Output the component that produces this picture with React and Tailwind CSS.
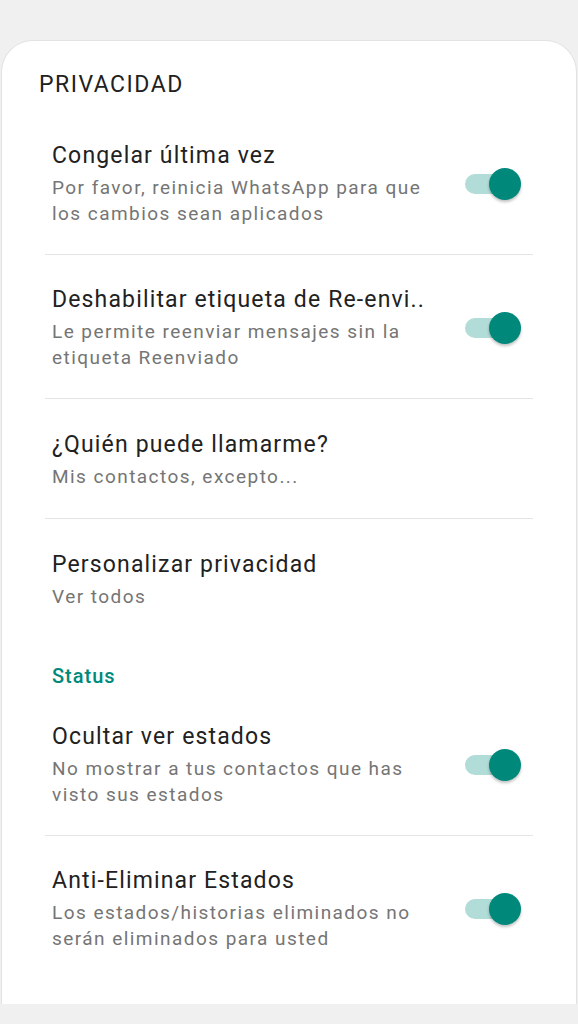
import React from "react";

const Toggle = () => (
  <div className="relative mr-[5px] h-[32px] w-[56px] shrink-0">
    <div className="absolute left-0 top-[6px] h-[20px] w-[48px] rounded-full bg-[#b2dcd7]" />
    <div className="absolute right-0 top-0 h-[32px] w-[32px] rounded-full bg-[#00897b] shadow-[0_2px_3px_rgba(0,0,0,0.25)]" />
  </div>
);

const Row = ({ title, sub, toggle, divider, oneLine }) => (
  <div className={divider ? "border-b border-[#e4e4e4]" : ""}>
    <div
      className={`flex items-center px-[7px] ${
        oneLine ? "pt-[31px] pb-[28px]" : "pt-[30px] pb-[27px]"
      }`}
    >
      <div className="min-w-0 flex-1">
        <div className="whitespace-nowrap text-[23px] leading-[30px] tracking-[1.15px] text-[#212121]">
          {title}
        </div>
        <div className="mt-[4px] pr-[20px] text-[19px] leading-[26px] tracking-[1.45px] text-[#757575]">
          {sub}
        </div>
      </div>
      {toggle && <Toggle />}
    </div>
  </div>
);

export default function App() {
  return (
    <div
      className="min-h-[1024px] bg-[#f0f0f0] pt-[40px]"
      style={{ fontFamily: "Roboto, 'Noto Sans', sans-serif" }}
    >
      <div className="mx-px h-[964px] rounded-t-[32px] border border-b-0 border-[#e2e2e2] bg-white px-[37px] pt-[29px]">
        <div className="text-[23px] leading-[30px] tracking-[1.5px] text-[#212121]">PRIVACIDAD</div>
        <div className="mx-[6px] mt-[11px]">
          <Row
            title="Congelar última vez"
            sub="Por favor, reinicia WhatsApp para que los cambios sean aplicados"
            toggle
            divider
          />
          <Row
            title="Deshabilitar etiqueta de Re-envi.."
            sub="Le permite reenviar mensajes sin la etiqueta Reenviado"
            toggle
            divider
          />
          <Row title="¿Quién puede llamarme?" sub="Mis contactos, excepto..." divider oneLine />
          <Row title="Personalizar privacidad" sub="Ver todos" oneLine />
          <div className="mb-[3px] mt-[25px] px-[7px] text-[20px] font-medium leading-[26px] tracking-[1px] text-[#00897b]">
            Status
          </div>
          <Row
            title="Ocultar ver estados"
            sub="No mostrar a tus contactos que has visto sus estados"
            toggle
            divider
          />
          <Row
            title="Anti-Eliminar Estados"
            sub="Los estados/historias eliminados no serán eliminados para usted"
            toggle
          />
        </div>
      </div>
    </div>
  );
}
